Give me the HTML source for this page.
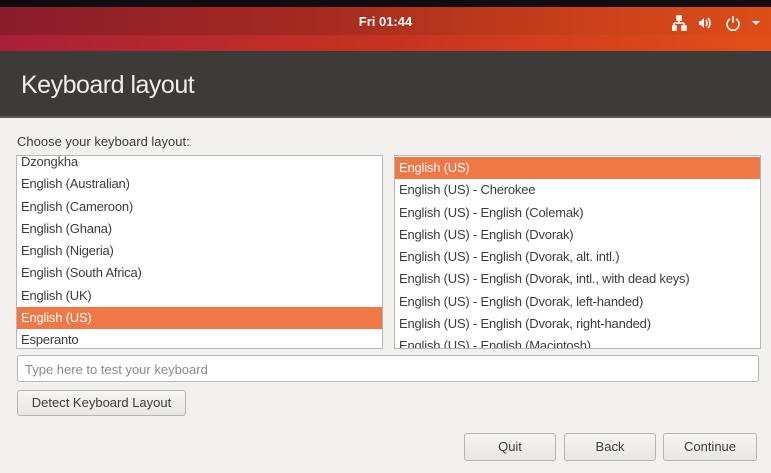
<!DOCTYPE html>
<html><head><meta charset="utf-8"><style>
*{margin:0;padding:0;box-sizing:border-box}
body{width:771px;height:473px;overflow:hidden;background:#f2f1f0;font-family:"Liberation Sans",sans-serif;position:relative;color:#3c3c3c}
.top{position:absolute;left:0;top:0;width:771px;height:7px;background:#120c10}
.bar{position:absolute;left:0;top:7px;width:771px;height:44px;background:linear-gradient(90deg,#8a1c2c 0%,#a32a20 40%,#c8401a 75%,#dd4d18 100%)}
.bar .bot{position:absolute;left:0;top:28px;width:100%;height:16px;background:linear-gradient(90deg,#a8203a,#c73220 50%,#e2501a)}
.clock{position:absolute;left:0;width:100%;text-align:center;top:7px;color:#fff;font-size:13px;font-weight:bold}
.hdr{position:absolute;left:0;top:51px;width:771px;height:67px;background:#3d3b37;border-bottom:2px solid #5a5854}
.hdr h1{position:absolute;left:21px;top:20px;font-weight:normal;font-size:25px;color:#eeeeec;letter-spacing:-0.5px}
.lbl{position:absolute;left:17px;top:134px;font-size:13px;color:#3c3c3c}
.list{position:absolute;top:155px;height:194px;background:#fff;border:1px solid #b8b6b3;overflow:hidden;font-size:13px;letter-spacing:-0.2px}
.list div{height:22.3px;line-height:22px;padding-left:4px;white-space:nowrap}
.sel{background:#f07746;color:#fff}
.input{position:absolute;left:17px;top:355px;width:742px;height:27px;border:1px solid #b8b6b3;border-radius:3px;background:#fff;font-size:13px;color:#8a8a8a;padding:6px 7px}
.btn{position:absolute;border:1px solid #b6b4b0;border-radius:3px;background:linear-gradient(#f6f5f4,#e8e7e5);font-size:13px;text-align:center;color:#3c3c3c}
</style></head><body>
<div class="top"></div>
<div class="bar"><div class="bot"></div><div class="clock">Fri 01:44</div>
<svg style="position:absolute;left:672px;top:8px" width="90" height="16" viewBox="0 0 90 16" fill="none" stroke="#fff" stroke-width="1.6">
<rect x="5" y="1" width="4" height="4" fill="#fff"/><path d="M7 5v3M2 8h10M2 8v3M12 8v3"/><rect x="0" y="11" width="4" height="4" fill="#fff"/><rect x="10" y="11" width="4" height="4" fill="#fff"/>
<path d="M27 6h2l3-3v10l-3-3h-2z" fill="#fff" stroke="none"/><path d="M34 5q2 3 0 6M36 3q4 5 0 10"/>
<path d="M58 4a6 6 0 1 0 6 0M61 1v7"/><path d="M80 6l4 4 4-4z" fill="#fff" stroke="none"/>
</svg></div>
<div class="hdr"><h1>Keyboard layout</h1></div>
<div class="lbl">Choose your keyboard layout:</div>
<div class="list" style="left:16px;width:367px">
<div style="margin-top:-5px">Dzongkha</div><div>English (Australian)</div><div>English (Cameroon)</div><div>English (Ghana)</div><div>English (Nigeria)</div><div>English (South Africa)</div><div>English (UK)</div><div class="sel">English (US)</div><div>Esperanto</div></div>
<div class="list" style="left:394px;width:367px">
<div class="sel" style="margin-top:1px">English (US)</div><div>English (US) - Cherokee</div><div>English (US) - English (Colemak)</div><div>English (US) - English (Dvorak)</div><div>English (US) - English (Dvorak, alt. intl.)</div><div>English (US) - English (Dvorak, intl., with dead keys)</div><div>English (US) - English (Dvorak, left-handed)</div><div>English (US) - English (Dvorak, right-handed)</div><div>English (US) - English (Macintosh)</div></div>
<div class="input">Type here to test your keyboard</div>
<div class="btn" style="left:17px;top:390px;width:169px;height:26px;line-height:24px">Detect Keyboard Layout</div>
<div class="btn" style="left:464px;top:433px;width:92px;height:28px;line-height:26px">Quit</div>
<div class="btn" style="left:564px;top:433px;width:92px;height:28px;line-height:26px">Back</div>
<div class="btn" style="left:663px;top:433px;width:94px;height:28px;line-height:26px">Continue</div>
</body></html>
